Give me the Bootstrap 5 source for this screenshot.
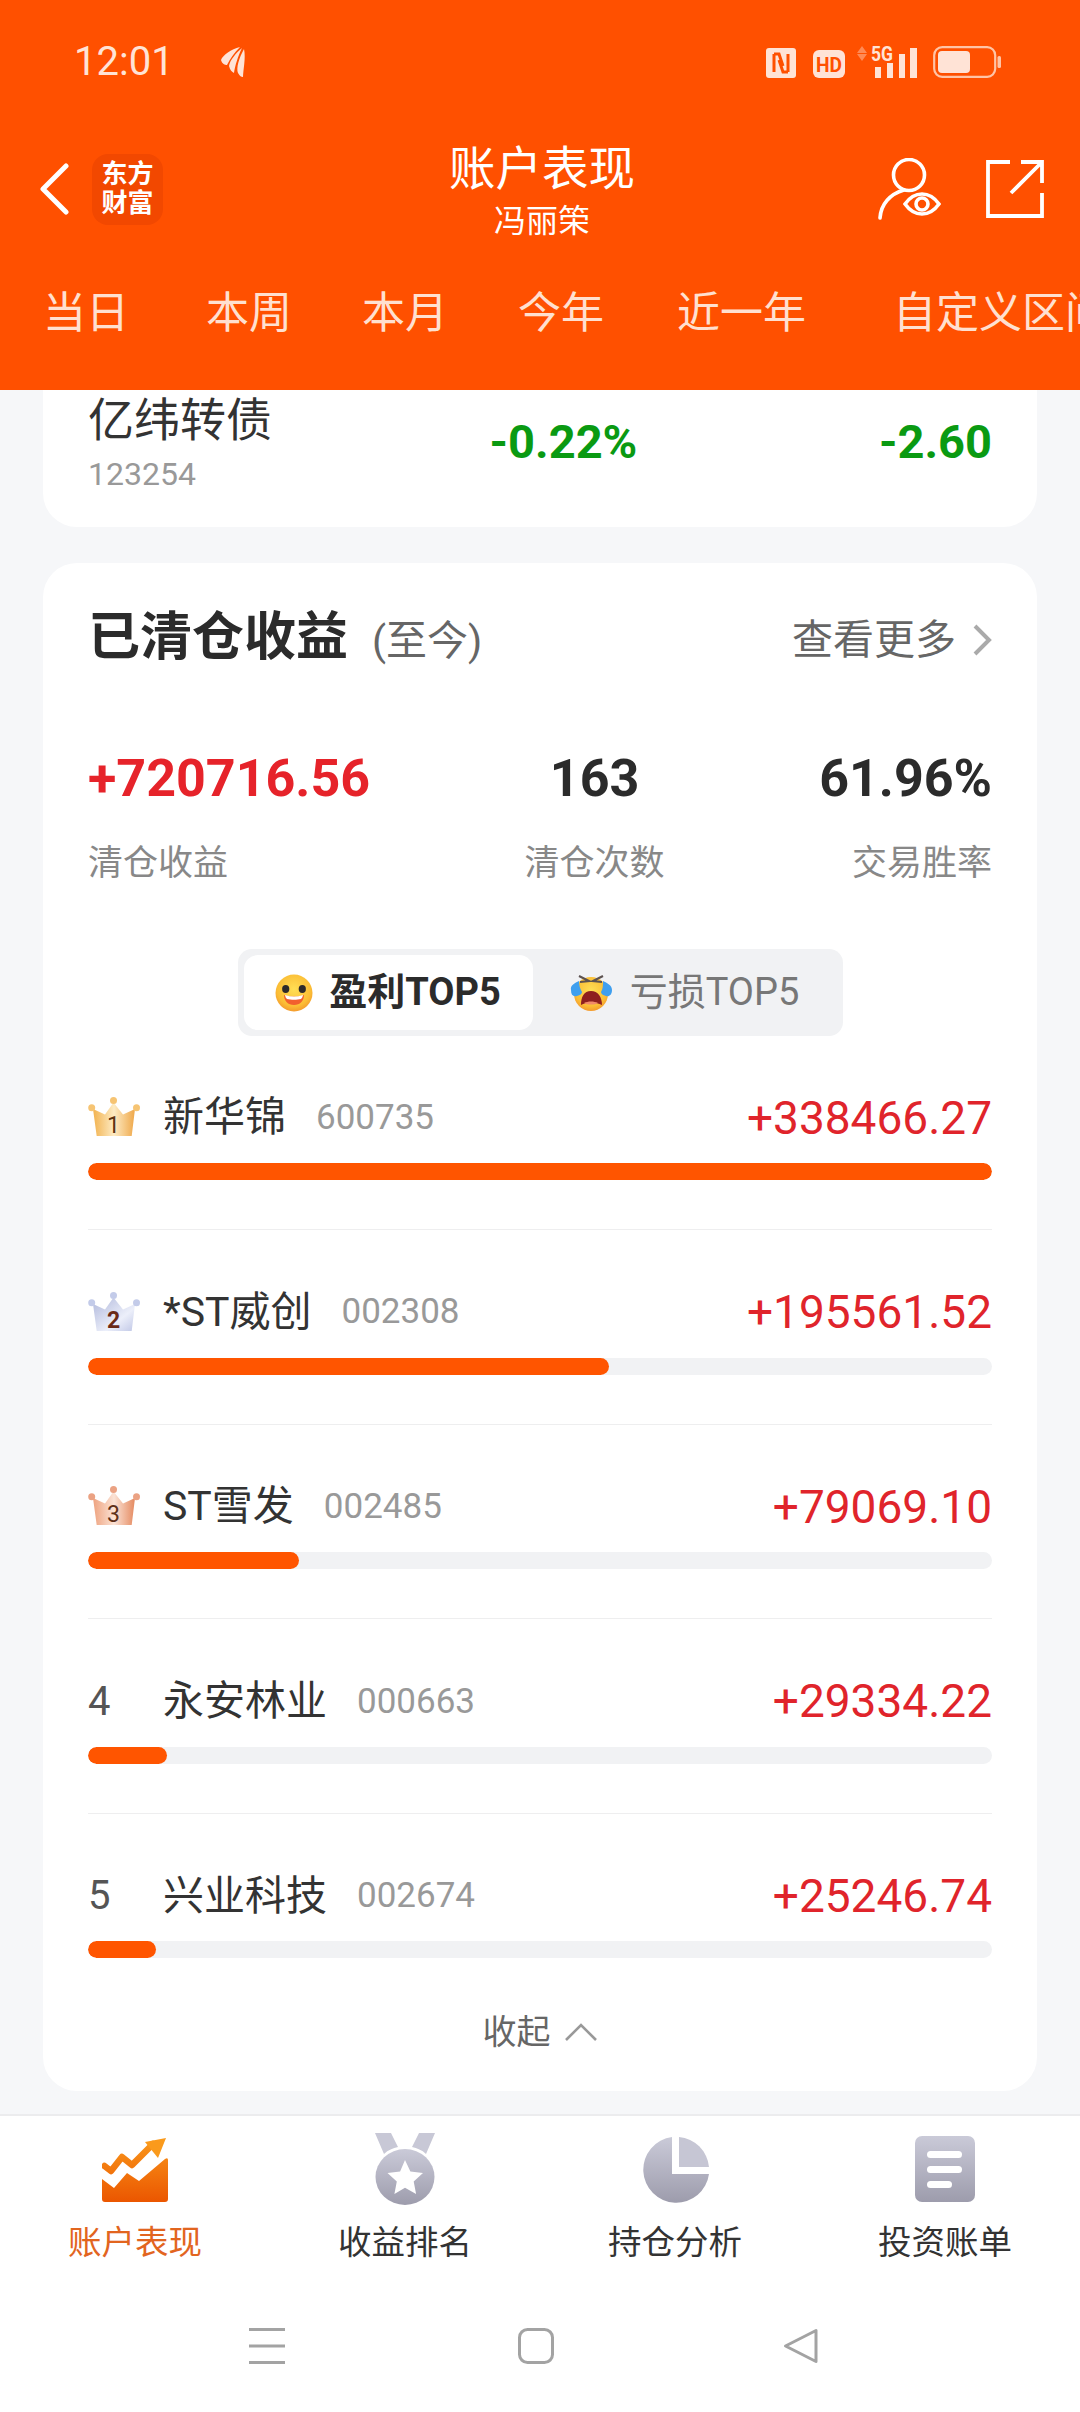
<!DOCTYPE html>
<html lang="zh-CN">
<head>
    <meta charset="UTF-8">
    <meta name="viewport" content="width=device-width, initial-scale=1.0">
    <title>账户表现</title>
    <link href="https://cdn.jsdelivr.net/npm/bootstrap@5.3.2/dist/css/bootstrap.min.css" rel="stylesheet">
    <style>
        body {
            width: 1080px;
            height: 2412px;
            overflow: hidden;
            background: #fff;
            font-family: Roboto, "Noto Sans CJK SC", sans-serif;
            color: #333;
        }
        .top-head { height: 390px; background: #ff5000; color: #fff; overflow: hidden; }
        .status-row { height: 124px; padding: 0 79px 0 74px; color: #ffe3d6; }
        .status-time { font-size: 40px; margin-right: 47px; }
        .gap-hd { margin-left: 17px; }
        .gap-net { margin-left: 12px; margin-top: -4px; }
        .gap-batt { margin-left: 14px; }
        .title-row { height: 130px; padding: 0 36px 0 40px; }
        .title-side { flex: 1 1 0; }
        .logo-box {
            width: 71px; height: 71px; margin-left: 23px; border-radius: 16px;
            background: #f24800; font-size: 26px; line-height: 29px; font-weight: 700; text-align: center;
            padding-top: 6px;
        }
        .title-mid { padding-top: 4px; }
        .page-title { font-size: 46.5px; line-height: 56px; }
        .page-sub { font-size: 32px; line-height: 40px; margin-top: 4px; }
        .share-icon { margin-left: 44px; }
        .range-tabs { height: 136px; padding: 33px 0 0 43px; flex-wrap: nowrap; color: #ffe0d0; font-size: 43px; line-height: 52px; white-space: nowrap; }
        .range-tabs span:nth-child(1) { margin-right: 77px; }
        .range-tabs span:nth-child(2), .range-tabs span:nth-child(3) { margin-right: 70px; }
        .range-tabs span:nth-child(4) { margin-right: 73px; }
        .range-tabs span:nth-child(5) { margin-right: 87px; }

        .scroll-area { height: 1726px; overflow: hidden; background: #f6f7f9; padding: 0 43px; border-bottom: 2px solid #ececee; }
        .white-box { --bs-card-border-radius: 34px; --bs-card-inner-border-radius: 34px; background: #fff; }
        .hold-box { margin-top: -40px; padding: 40px 45px 33px 45px; }
        .hold-name { font-size: 46px; line-height: 60px; }
        .hold-code { font-size: 32px; line-height: 40px; margin-top: 4px; color: #999; }
        .hold-val { font-size: 47px; font-weight: 700; color: #0a9a12; }
        .hold-pct { margin-right: 24px; }

        .clear-box { margin-top: 36px; padding: 45px 45px 35px 45px; }
        .clear-title { font-size: 52px; line-height: 60px; font-weight: 700; color: #2b2b2b; }
        .clear-since { font-size: 41px; color: #666; margin-left: 24px; }
        .clear-more { font-size: 41px; line-height: 60px; color: #666; }
        .stats-row { margin-top: 78px; }
        .stat-num { font-size: 52px; line-height: 60px; font-weight: 700; color: #2b2b2b; }
        .stat-red { color: #e6232a; }
        .stat-cap { font-size: 35px; line-height: 48px; margin-top: 31px; color: #888; }

        .toggle-box { width: 605px; height: 87px; margin: 61px auto 0; padding: 6px; background: #f1f2f4; border-radius: 14px; }
        .toggle-on, .toggle-off { height: 75px; font-size: 38px; }
        .toggle-on { width: 289px; background: #fff; border-radius: 14px; font-weight: 700; color: #2b2b2b; }
        .toggle-off { flex: 1; color: #777; }
        .toggle-box svg { margin-right: 16px; }

        .rank-item { padding: 52.6px 0 49px; border-bottom: 1px solid #eeeeef; }
        .rank-first { padding-top: 52px; }
        .rank-last { border-bottom: 0; padding-bottom: 0; }
        .rank-head { height: 60px; }
        .rank-no { width: 75px; font-size: 40px; color: #555; }
        .rank-name { font-size: 41px; }
        .rank-code { font-size: 35px; color: #999; margin-left: 30px; }
        .rank-val { font-size: 46px; color: #e0242b; margin-left: auto; }
        .rank-bar { --bs-progress-height: 17px; --bs-progress-bg: #f1f2f4; --bs-progress-bar-bg: #ff5500; --bs-progress-border-radius: 9px; margin-top: 15px; }
        .rank-bar .progress-bar { border-radius: 9px; }
        .fold-row { height: 48px; margin-top: 50px; font-size: 34px; color: #666; }
        .fold-row svg { margin-left: 13px; }

        .tab-bar { height: 296px; background: #fff; }
        .tab-cell { height: 150px; padding-top: 17px; font-size: 33.500px; line-height: 44px; color: #333; }
        .tab-icon { height: 72px; margin-bottom: 16px; }
        .tab-on { color: #e2651f; }
        .nav-keys { padding: 62px 0 0 249px; }
        .nav-keys svg { display: block; }
        .key-home { margin-left: 233px; }
        .key-back { margin-left: 229px; }
    </style>
</head>
<body>
<svg width="0" height="0" class="position-absolute">
    <defs>
        <linearGradient id="greyFill" x1="0" y1="0" x2="0" y2="1"><stop offset="0" stop-color="#cacad8"/><stop offset="1" stop-color="#9d9cac"/></linearGradient>
        <linearGradient id="orangeFill" gradientUnits="userSpaceOnUse" x1="0" y1="0" x2="0" y2="65"><stop offset="0" stop-color="#fa9a1c"/><stop offset="1" stop-color="#eb5600"/></linearGradient>
        <linearGradient id="goldFill" x1="0" y1="0" x2="1" y2="0"><stop offset="0" stop-color="#f2b24e"/><stop offset="0.5" stop-color="#fdebc4"/><stop offset="1" stop-color="#efa748"/></linearGradient>
        <linearGradient id="silverFill" x1="0" y1="0" x2="1" y2="1"><stop offset="0" stop-color="#aeb6da"/><stop offset="0.65" stop-color="#eceffa"/><stop offset="1" stop-color="#c0c7e6"/></linearGradient>
        <linearGradient id="bronzeFill" x1="0" y1="0" x2="1" y2="0"><stop offset="0" stop-color="#eea27e"/><stop offset="0.5" stop-color="#fbe3d6"/><stop offset="1" stop-color="#e58a60"/></linearGradient>
        <radialGradient id="faceFill" cx="0.5" cy="0.4" r="0.65"><stop offset="0" stop-color="#ffdf55"/><stop offset="0.7" stop-color="#fbbd35"/><stop offset="1" stop-color="#f28f2a"/></radialGradient>
    </defs>
</svg>

<header class="top-head">
    <div class="status-row d-flex align-items-center">
        <span class="status-time">12:01</span>
        <svg width="26" height="32" viewBox="0 0 26 32" fill="#ffe3d6"><path d="M19 1C10 3 2 9 0 14c1 4 4 5 6 5 3-6 7-12 13-18z"/><path d="M21 2C15 7 9 14 8 20c1 4 3 6 5 7 1-7 4-17 8-25z"/><path d="M23 3c-5 9-8 19-6 24 2 3 3 4 5 4 0-7 3-19 1-28z"/></svg>
        <div class="ms-auto d-flex align-items-end">
            <svg width="30" height="30" viewBox="0 0 30 30"><rect width="30" height="30" rx="3" fill="#ffe3d6"/><path d="M8 6v18M22 6v18M8 6h5l4 12M22 24h-5l-4-12" stroke="#ff5000" stroke-width="3" fill="none"/></svg>
            <svg class="gap-hd" width="32" height="28" viewBox="0 0 32 28"><rect width="32" height="28" rx="6" fill="#ffe3d6"/><text x="16" y="21.500" text-anchor="middle" font-family="Roboto" font-weight="700" font-size="20" textLength="26" lengthAdjust="spacingAndGlyphs" fill="#ff5000">HD</text></svg>
            <svg class="gap-net" width="62" height="36" viewBox="0 -4 62 36"><path d="M5 0l5 7H0zM5 15l5-7H0z" fill="#ff8a55"/><text x="14" y="15" font-family="Roboto" font-weight="700" font-size="20" textLength="22" lengthAdjust="spacingAndGlyphs" fill="#ffe3d6">5G</text><path d="M18 21h6v11h-6zM30 17h6v15h-6zM42 8h6v24h-6zM53 2h7v30h-7z" fill="#ffe3d6"/></svg>
            <svg class="gap-batt" width="68" height="32" viewBox="0 0 68 32"><rect x="1.200" y="1.200" width="61" height="29.600" rx="8" fill="none" stroke="#ffc4a6" stroke-width="2.200"/><rect x="5" y="5" width="32" height="22" rx="4" fill="#ffe3d6"/><rect x="64.500" y="10" width="3.500" height="12" rx="1.500" fill="#ffc4a6"/></svg>
        </div>
    </div>
    <div class="title-row d-flex align-items-center">
        <div class="title-side d-flex align-items-center">
            <svg width="29" height="52" viewBox="0 0 29 52"><path d="M26 3 3 26l23 23" fill="none" stroke="#fff" stroke-width="5" stroke-linecap="round" stroke-linejoin="round"/></svg>
            <div class="logo-box">东方<br>财富</div>
        </div>
        <div class="text-center title-mid">
            <div class="page-title">账户表现</div>
            <div class="page-sub">冯丽筞</div>
        </div>
        <div class="title-side d-flex justify-content-end align-items-center">
            <svg width="64" height="62" viewBox="0 0 64 62"><g fill="none" stroke="#fff" stroke-width="3.600"><circle cx="31" cy="17" r="15.500"/><path d="M2 60c1-14 10-24 24-28" stroke-linecap="round"/><path d="M27 46c5-7 11-10 17-10s12 3 17 10c-5 7-11 10-17 10s-12-3-17-10z"/><circle cx="44" cy="46" r="6"/></g></svg>
            <svg class="share-icon" width="58" height="58" viewBox="0 0 58 58"><g fill="none" stroke="#fff" stroke-width="3.800"><path d="M24 2H2v54h54V33"/><path d="M35 2h21v21M56 2 25 33"/></g></svg>
        </div>
    </div>
    <div class="range-tabs d-flex">
        <span>当日</span><span>本周</span><span>本月</span><span>今年</span><span>近一年</span><span>自定义区间</span>
    </div>
</header>

<main class="scroll-area">
    <section class="card border-0 white-box hold-box">
        <div class="d-flex justify-content-between align-items-center">
            <div>
                <div class="hold-name">亿纬转债</div>
                <div class="hold-code">123254</div>
            </div>
            <div class="hold-val hold-pct">-0.22%</div>
            <div class="hold-val">-2.60</div>
        </div>
    </section>

    <section class="card border-0 white-box clear-box">
        <div class="d-flex justify-content-between align-items-center">
            <div class="clear-title">已清仓收益<span class="clear-since fw-normal">(至今)</span></div>
            <div class="clear-more d-flex align-items-center">查看更多
                <svg class="ms-3" width="20" height="34" viewBox="0 0 20 34"><path d="M3 3l14 14L3 31" fill="none" stroke="#aaa" stroke-width="4"/></svg>
            </div>
        </div>
        <div class="stats-row d-flex justify-content-between">
            <div>
                <div class="stat-num stat-red">+720716.56</div>
                <div class="stat-cap">清仓收益</div>
            </div>
            <div class="text-center">
                <div class="stat-num">163</div>
                <div class="stat-cap">清仓次数</div>
            </div>
            <div class="text-end">
                <div class="stat-num">61.96%</div>
                <div class="stat-cap">交易胜率</div>
            </div>
        </div>

        <div class="toggle-box d-flex">
            <div class="toggle-on d-flex align-items-center justify-content-center">
                <svg width="38" height="38" viewBox="0 0 38 38"><circle cx="19" cy="19" r="18.500" fill="url(#faceFill)"/><ellipse cx="10.700" cy="15" rx="3.600" ry="4" fill="#2e2a2a"/><ellipse cx="27.300" cy="15" rx="3.600" ry="4" fill="#2e2a2a"/><path d="M9 21c7 2 13 2 20 0 0 6-4 10-10 10S9 27 9 21z" fill="#f2602e"/><path d="M10 21c6 2 12 2 18 0-.3 2-1 3-2 4-4 1-10 1-14 0-1-1-1.700-2-2-4z" fill="#fff"/></svg>
                盈利TOP5
            </div>
            <div class="toggle-off d-flex align-items-center justify-content-center">
                <svg width="44" height="40" viewBox="0 0 44 40"><circle cx="21" cy="21" r="17" fill="url(#faceFill)"/><path d="M9 3l10 5-9 1M33 3l-10 5 9 1" fill="none" stroke="#5c5250" stroke-width="2.200"/><path d="M21 18c7 0 11 6 11 14-6-3-16-3-21 0 0-8 3-14 10-14z" fill="#8e1f1f"/><path d="M14 30c4-2 10-2 14 0-3 2-11 2-14 0z" fill="#f28a6a"/><path d="M9 8C5 10 0 12 1 17c0 5 2 7 6 6 3-1 5-2 5-4-2-3-3-7-3-11zM33 8c4 2 9 4 9 9 0 5-3 7-6 6-3-1-5-2-5-4 2-3 2-7 2-11z" fill="#3f9fee"/></svg>
                亏损TOP5
            </div>
        </div>

        <div class="rank-item rank-first">
            <div class="rank-head d-flex align-items-center">
                <div class="rank-no">
                    <svg class="d-block" width="52" height="42" viewBox="0 0 52 42"><path d="M5 12l12 5.500L25.500 5.500 35 17.500 47 12l-3.300 27H8.700z" fill="url(#goldFill)"/><g fill="#f6c473"><circle cx="3.700" cy="10.700" r="3.500"/><circle cx="25.500" cy="3.500" r="3.500"/><circle cx="48.500" cy="10.700" r="3.500"/></g><text x="25.500" y="36" text-anchor="middle" font-family="Roboto" font-size="23" fill="#5e3210">1</text></svg>
                </div>
                <span class="rank-name">新华锦</span><span class="rank-code">600735</span>
                <span class="rank-val">+338466.27</span>
            </div>
            <div class="progress rank-bar"><div class="progress-bar" style="width:100%"></div></div>
        </div>
        <div class="rank-item">
            <div class="rank-head d-flex align-items-center">
                <div class="rank-no">
                    <svg class="d-block" width="52" height="42" viewBox="0 0 52 42"><path d="M5 12l12 5.500L25.500 5.500 35 17.500 47 12l-3.300 27H8.700z" fill="url(#silverFill)"/><g fill="#c3cbe9"><circle cx="3.700" cy="10.700" r="3.500"/><circle cx="25.500" cy="3.500" r="3.500"/><circle cx="48.500" cy="10.700" r="3.500"/></g><text x="25.500" y="36" text-anchor="middle" font-family="Roboto" font-weight="700" font-size="23" fill="#6b2a18">2</text></svg>
                </div>
                <span class="rank-name">*ST威创</span><span class="rank-code">002308</span>
                <span class="rank-val">+195561.52</span>
            </div>
            <div class="progress rank-bar"><div class="progress-bar" style="width:57.6%"></div></div>
        </div>
        <div class="rank-item">
            <div class="rank-head d-flex align-items-center">
                <div class="rank-no">
                    <svg class="d-block" width="52" height="42" viewBox="0 0 52 42"><path d="M5 12l12 5.500L25.500 5.500 35 17.500 47 12l-3.300 27H8.700z" fill="url(#bronzeFill)"/><g fill="#eba283"><circle cx="3.700" cy="10.700" r="3.500"/><circle cx="25.500" cy="3.500" r="3.500"/><circle cx="48.500" cy="10.700" r="3.500"/></g><text x="25.500" y="36" text-anchor="middle" font-family="Roboto" font-size="23" fill="#5e3018">3</text></svg>
                </div>
                <span class="rank-name">ST雪发</span><span class="rank-code">002485</span>
                <span class="rank-val">+79069.10</span>
            </div>
            <div class="progress rank-bar"><div class="progress-bar" style="width:23.3%"></div></div>
        </div>
        <div class="rank-item">
            <div class="rank-head d-flex align-items-center">
                <div class="rank-no">4</div>
                <span class="rank-name">永安林业</span><span class="rank-code">000663</span>
                <span class="rank-val">+29334.22</span>
            </div>
            <div class="progress rank-bar"><div class="progress-bar" style="width:8.7%"></div></div>
        </div>
        <div class="rank-item rank-last">
            <div class="rank-head d-flex align-items-center">
                <div class="rank-no">5</div>
                <span class="rank-name">兴业科技</span><span class="rank-code">002674</span>
                <span class="rank-val">+25246.74</span>
            </div>
            <div class="progress rank-bar"><div class="progress-bar" style="width:7.5%"></div></div>
        </div>
        <div class="fold-row d-flex align-items-center justify-content-center">收起
            <svg width="34" height="20" viewBox="0 0 34 20"><path d="M2 18 17 3l15 15" fill="none" stroke="#999" stroke-width="2.600"/></svg>
        </div>
    </section>
</main>

<footer class="tab-bar">
    <div class="row g-0 text-center">
        <div class="col-3 tab-cell tab-on">
            <div class="tab-icon d-flex justify-content-center align-items-center">
                <svg width="66" height="65" viewBox="0 0 66 65"><path d="M2.500 29 9 34l11-14 10 8L51 7" fill="none" stroke="url(#orangeFill)" stroke-width="6.500" stroke-linecap="round" stroke-linejoin="round"/><path d="M43 5 64 1l-8 20z" fill="#fa9a1c"/><path d="M0 42l12 9 13-15 12 8 26-22q3-2 3 1v39q0 3-3 3H3q-3 0-3-3z" fill="url(#orangeFill)"/></svg>
            </div>
            账户表现
        </div>
        <div class="col-3 tab-cell">
            <div class="tab-icon d-flex justify-content-center align-items-center">
                <svg width="60" height="72" viewBox="0 0 60 72"><path d="M0 0h16l7 14c-5 1-10 3-14 7zM60 0H44l-7 14c5 1 10 3 14 7z" fill="#c8c8d6"/><ellipse cx="30" cy="44" rx="29.500" ry="28" fill="url(#greyFill)"/><path d="M30 27l5.400 11.500 12.600 1.500-9.300 8.600 2.400 12.400L30 54.800 19.400 61l2.400-12.400L12.500 40l12.600-1.500z" fill="#fff"/></svg>
            </div>
            收益排名
        </div>
        <div class="col-3 tab-cell">
            <div class="tab-icon d-flex justify-content-center align-items-center">
                <svg width="67" height="67" viewBox="0 0 67 67"><path d="M30 1A33 33 0 1 0 67 38H30z" fill="url(#greyFill)"/><path d="M37 1a33 33 0 0 1 30 30H37z" fill="#c6c6d4"/></svg>
            </div>
            持仓分析
        </div>
        <div class="col-3 tab-cell">
            <div class="tab-icon d-flex justify-content-center align-items-center">
                <svg width="60" height="66" viewBox="0 0 60 66"><rect width="60" height="66" rx="7" fill="url(#greyFill)"/><g fill="#fff"><rect x="12" y="15" width="35" height="7" rx="3.500"/><rect x="12" y="30" width="35" height="7" rx="3.500"/><rect x="12" y="45" width="25" height="7" rx="3.500"/></g></svg>
            </div>
            投资账单
        </div>
    </div>
    <div class="nav-keys d-flex">
        <svg width="36" height="36" viewBox="0 0 36 36"><path d="M0 1.500h36M0 18h36M0 34.500h36" stroke="#a3a3a3" stroke-width="3"/></svg>
        <svg class="key-home" width="36" height="36" viewBox="0 0 36 36"><rect x="1.500" y="1.500" width="33" height="33" rx="8" fill="none" stroke="#a3a3a3" stroke-width="3"/></svg>
        <svg class="key-back" width="36" height="36" viewBox="0 0 36 36"><path d="M33 2.500v31L2.500 18z" fill="none" stroke="#a3a3a3" stroke-width="3" stroke-linejoin="round"/></svg>
    </div>
</footer>
<script src="https://cdn.jsdelivr.net/npm/bootstrap@5.3.2/dist/js/bootstrap.bundle.min.js"></script>
</body>
</html>
